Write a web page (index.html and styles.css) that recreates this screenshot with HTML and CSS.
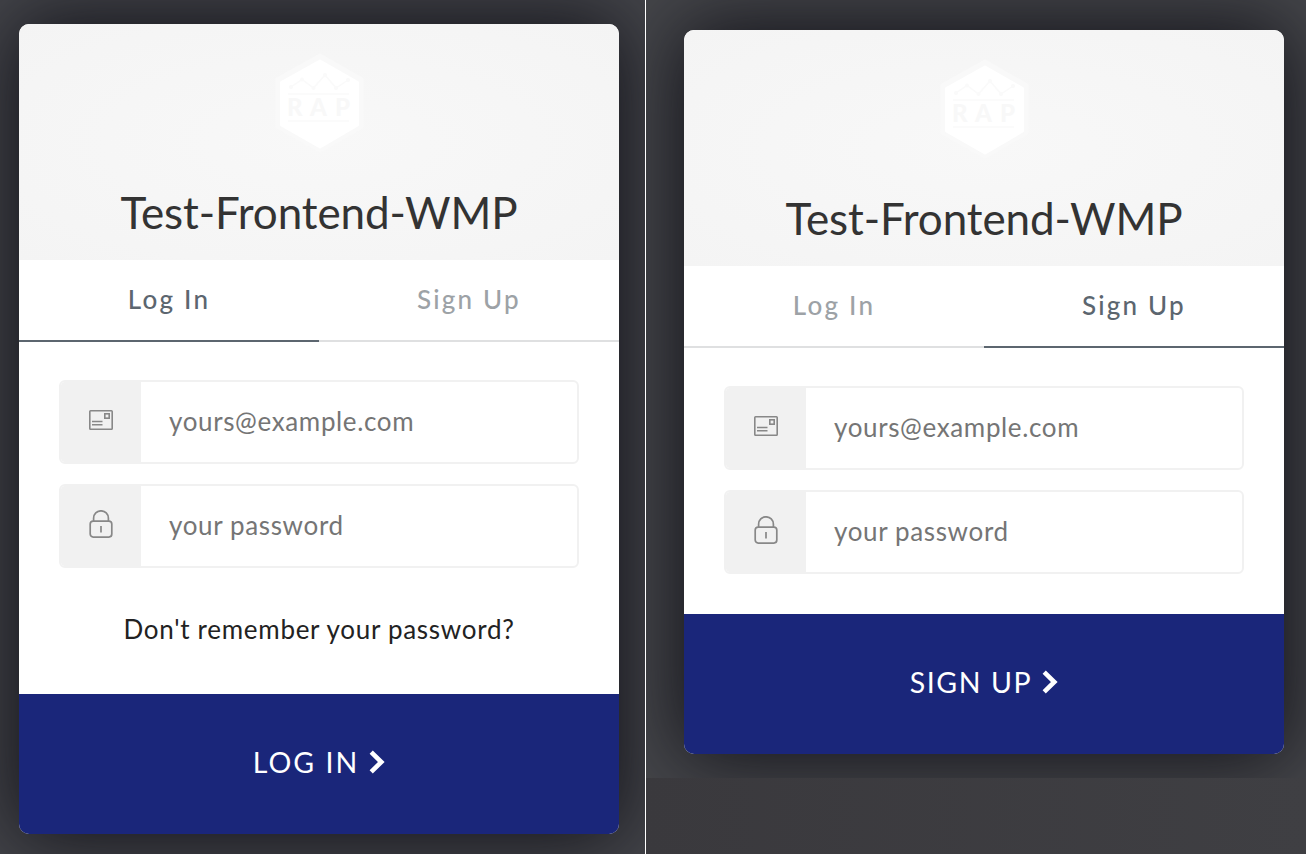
FILE: index.html
```html
<!DOCTYPE html>
<html lang="en">
<head>
<meta charset="utf-8">
<title>Test-Frontend-WMP</title>
<link rel="stylesheet" href="styles.css">
</head>
<body>
<svg class="defs" width="0" height="0" aria-hidden="true">
  <symbol id="logo" viewBox="0 0 120 120">
    <path d="M60 10 L102 34 V82 L60 106 L17 82 V34 Z" fill="#f9f9f9" stroke="#f9f9f9" stroke-width="3" stroke-linejoin="round"/>
    <path d="M60 16 L97.500 37.500 V80 L60 102 L21.500 80 V37.500 Z" fill="#fff" stroke="#fff" stroke-width="3" stroke-linejoin="round"/>
    <g fill="none" stroke="#fafafa" stroke-width="1.500">
      <path d="M31 42 L42 34.500 L53.500 43 L65 30 L76 43 L88 35"/>
      <path d="M28 49H89M28 76H89"/>
    </g>
    <g fill="#fafafa"><circle cx="31" cy="42" r="2"/><circle cx="42" cy="34.500" r="2"/><circle cx="53.500" cy="43" r="2"/><circle cx="65" cy="30" r="2"/><circle cx="76" cy="43" r="2"/><circle cx="88" cy="35" r="2"/></g>
    <g class="logo-text"><text x="27" y="70.500">R</text><text x="50" y="70.500">A</text><text x="75" y="70.500">P</text></g>
  </symbol>
  <symbol id="mail" viewBox="0 0 24 20">
    <g fill="none" stroke="#888" stroke-width="1.600"><rect x=".8" y=".8" width="22.400" height="18.400" rx=".8"/><rect x="15.800" y="3.800" width="4.400" height="4.400"/><path d="M3 11.500H13.500M3 14.700H13.500"/></g>
  </symbol>
  <symbol id="lock" viewBox="0 0 24 28">
    <g fill="none" stroke="#888" stroke-width="1.700"><rect x="1.200" y="11.100" width="21.600" height="16" rx="3"/><path d="M4.600 11V8.200a7.400 7.400 0 0 1 14.800 0V11M12 16v6.500"/></g>
  </symbol>
  <symbol id="chevron" viewBox="0 0 16 24"><path d="M2.200 2.200L12.300 12L2.200 21.800" fill="none" stroke="#fff" stroke-width="4.600"/></symbol>
</svg>
<main class="screen">
  <section class="pane pane-login">
    <form class="card">
      <header class="head">
        <svg class="logo"><use href="#logo"/></svg>
        <h1 class="title">Test-Frontend-WMP</h1>
      </header>
      <nav class="tabs"><a class="tab active">Log In</a><a class="tab">Sign Up</a></nav>
      <div class="fields">
        <label class="field"><span class="icon"><svg class="mail"><use href="#mail"/></svg></span><span class="hint">yours@example.com</span></label>
        <label class="field"><span class="icon"><svg class="lock"><use href="#lock"/></svg></span><span class="hint">your password</span></label>
      </div>
      <a class="forgot">Don't remember your password?</a>
      <button class="submit submit-login" type="button"><span>LOG IN</span><svg class="chevron"><use href="#chevron"/></svg></button>
    </form>
  </section>
  <section class="pane pane-signup">
    <div class="overlay">
    <form class="card">
      <header class="head">
        <svg class="logo"><use href="#logo"/></svg>
        <h1 class="title">Test-Frontend-WMP</h1>
      </header>
      <nav class="tabs"><a class="tab">Log In</a><a class="tab active">Sign Up</a></nav>
      <div class="fields">
        <label class="field"><span class="icon"><svg class="mail"><use href="#mail"/></svg></span><span class="hint">yours@example.com</span></label>
        <label class="field"><span class="icon"><svg class="lock"><use href="#lock"/></svg></span><span class="hint">your password</span></label>
      </div>
      <button class="submit" type="button"><span>SIGN UP</span><svg class="chevron"><use href="#chevron"/></svg></button>
    </form>
    </div>
  </section>
</main>
</body>
</html>
```
FILE: styles.css
```css
* { box-sizing: border-box; }
body { margin: 0; font-family: Lato, "Open Sans", sans-serif; }
.defs { display: none; }
.screen { display: flex; width: 1306px; height: 854px; overflow: hidden; background: #3b3a3e; }
.pane { overflow: hidden; height: 854px; }
.pane-login { width: 646px; padding: 24px 0 0 19px; border-right: 1px solid #fff; background: #44454a; }
.pane-signup { width: 660px; background: linear-gradient(90deg, #3a393d, #3f3f43); }
.overlay { height: 778px; overflow: hidden; padding: 30px 0 0 38px; background: #45464a; }
.card { display: flex; flex-direction: column; width: 600px; border-radius: 10px; background: #fff; box-shadow: 0 0 80px 4px #111118; }
.head { display: flex; flex-direction: column; align-items: center; height: 236px; padding-top: 21px; border-radius: 10px 10px 0 0; background: radial-gradient(ellipse at 50% 50%, #f8f8f8, #f4f4f4); }
.logo { width: 120px; height: 120px; margin-left: 2px; }
.logo-text { font: 900 24px Lato, sans-serif; fill: #f8f8f8; }
.title { margin: 19px 0 0; font-size: 44px; font-weight: 400; line-height: 56px; letter-spacing: -0.1px; color: #333; white-space: nowrap; }
.tabs { display: flex; height: 82px; }
.tab { display: flex; flex: 1; justify-content: center; padding-top: 23px; border-bottom: 2px solid #dfe0e1; font-size: 26px; font-weight: 500; line-height: 32px; letter-spacing: 2.2px; color: #9da2a6; }
.tab.active { color: #5c666f; border-color: #5c666f; }
.fields { display: grid; gap: 20px; padding: 38px 40px 40px; }
.field { display: flex; height: 84px; border: 2px solid #f1f1f1; border-radius: 6px; overflow: hidden; }
.icon { display: flex; justify-content: center; align-items: center; width: 80px; padding-bottom: 4px; background: #f1f1f1; }
.mail { width: 24px; height: 20px; }
.lock { width: 24px; height: 28px; }
.hint { padding: 23px 0 0 28px; font-size: 26px; line-height: 32px; letter-spacing: 0.64px; color: #757575; }
.forgot { height: 86px; padding-top: 5px; text-align: center; font-size: 26px; line-height: 32px; letter-spacing: 0.72px; color: #222; }
.submit { display: flex; justify-content: center; align-items: center; gap: 10px; height: 140px; border: 0; padding: 0 0 4px; border-radius: 0 0 10px 10px; background: #1a267a; color: #fff; font: 400 28.500px/36px Lato, sans-serif; letter-spacing: 1.6px; }
.submit-login { letter-spacing: 2px; }
.chevron { width: 16px; height: 24px; }
```
